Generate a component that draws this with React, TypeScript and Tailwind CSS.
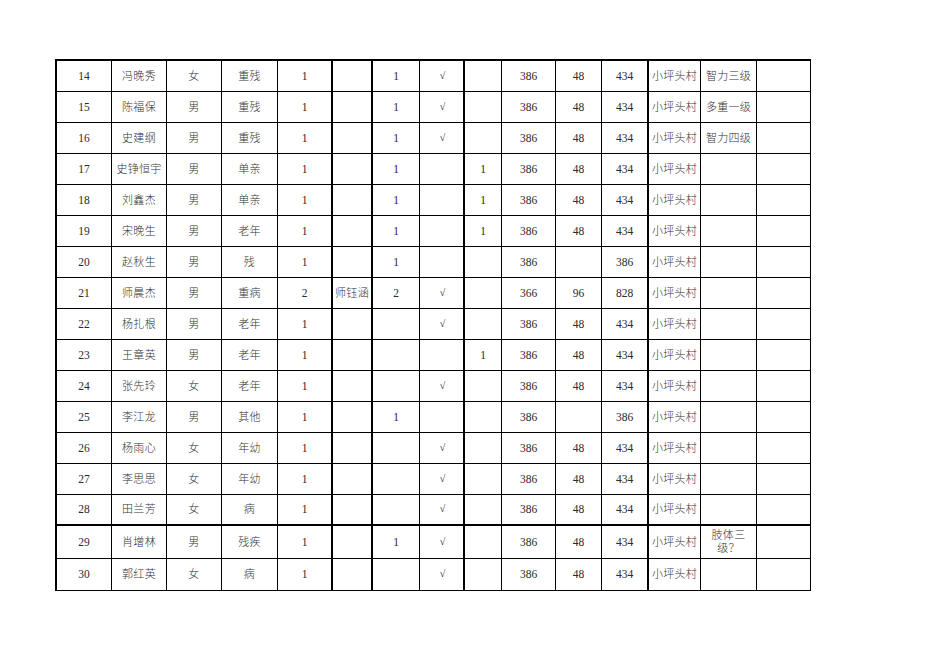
import React from "react";

type Row = string[];

const V = "小坪头村";
const rows: Row[] = [
  ["14", "冯晚秀", "女", "重残", "1", "", "1", "√", "", "386", "48", "434", V, "智力三级", ""],
  ["15", "陈福保", "男", "重残", "1", "", "1", "√", "", "386", "48", "434", V, "多重一级", ""],
  ["16", "史建纲", "男", "重残", "1", "", "1", "√", "", "386", "48", "434", V, "智力四级", ""],
  ["17", "史铮恒宇", "男", "单亲", "1", "", "1", "", "1", "386", "48", "434", V, "", ""],
  ["18", "刘鑫杰", "男", "单亲", "1", "", "1", "", "1", "386", "48", "434", V, "", ""],
  ["19", "宋晚生", "男", "老年", "1", "", "1", "", "1", "386", "48", "434", V, "", ""],
  ["20", "赵秋生", "男", "残", "1", "", "1", "", "", "386", "", "386", V, "", ""],
  ["21", "师晨杰", "男", "重病", "2", "师钰涵", "2", "√", "", "366", "96", "828", V, "", ""],
  ["22", "杨扎根", "男", "老年", "1", "", "", "√", "", "386", "48", "434", V, "", ""],
  ["23", "王章英", "男", "老年", "1", "", "", "", "1", "386", "48", "434", V, "", ""],
  ["24", "张先玲", "女", "老年", "1", "", "", "√", "", "386", "48", "434", V, "", ""],
  ["25", "李江龙", "男", "其他", "1", "", "1", "", "", "386", "", "386", V, "", ""],
  ["26", "杨雨心", "女", "年幼", "1", "", "", "√", "", "386", "48", "434", V, "", ""],
  ["27", "李思思", "女", "年幼", "1", "", "", "√", "", "386", "48", "434", V, "", ""],
  ["28", "田兰芳", "女", "病", "1", "", "", "√", "", "386", "48", "434", V, "", ""],
  ["29", "肖增林", "男", "残疾", "1", "", "1", "√", "", "386", "48", "434", V, "肢体三\n级？", ""],
  ["30", "郭红英", "女", "病", "1", "", "", "√", "", "386", "48", "434", V, "", ""],
];

const colClass = [
  "w-[55px] border-r",
  "w-[55px] border-r",
  "w-[55px] border-r",
  "w-[56px] border-r",
  "w-[55px] border-r-2",
  "w-[40px] border-r-2",
  "w-[47px] border-r",
  "w-[45px] border-r-2",
  "w-[37px] border-r",
  "w-[54px] border-r",
  "w-[46px] border-r",
  "w-[47px] border-r-2",
  "w-[52px] border-r",
  "w-[56px] border-r",
  "w-[54px] border-r",
];

function rowClass(i: number): string {
  if (i === 14) return "h-[31px] border-b-2";
  if (i === 15) return "h-[33px] border-b";
  if (i === 16) return "h-[32px] border-b";
  return "h-[31px] border-b";
}

const cjk = /[\u4e00-\u9fff]/;

function Content({ c }: { c: string }) {
  if (c === "√") {
    return <span className="relative left-[1px] -top-[1px] text-[10px]">√</span>;
  }
  if (cjk.test(c)) {
    return (
      <span className="text-[11px] leading-[13px] font-light tracking-[0.3px] text-[#333]">
        {c}
      </span>
    );
  }
  return <span>{c}</span>;
}

export default function App() {
  return (
    <div className="w-[936px] h-[662px] bg-white pt-[59px] pl-[55px]">
      <div
        className="inline-flex flex-col border-t-2 border-l-2 border-black text-[#2a2a2a] text-[11.5px] leading-[13px]"
        style={{ fontFamily: '"Liberation Serif", "Noto Sans CJK SC", serif' }}
      >
        {rows.map((r, i) => (
          <div key={i} className={`flex border-black ${rowClass(i)}`}>
            {r.map((c, j) => (
              <div
                key={j}
                className={`${colClass[j]} border-black shrink-0 flex items-center justify-center text-center whitespace-pre-line`}
              >
                <Content c={c} />
              </div>
            ))}
          </div>
        ))}
      </div>
    </div>
  );
}
